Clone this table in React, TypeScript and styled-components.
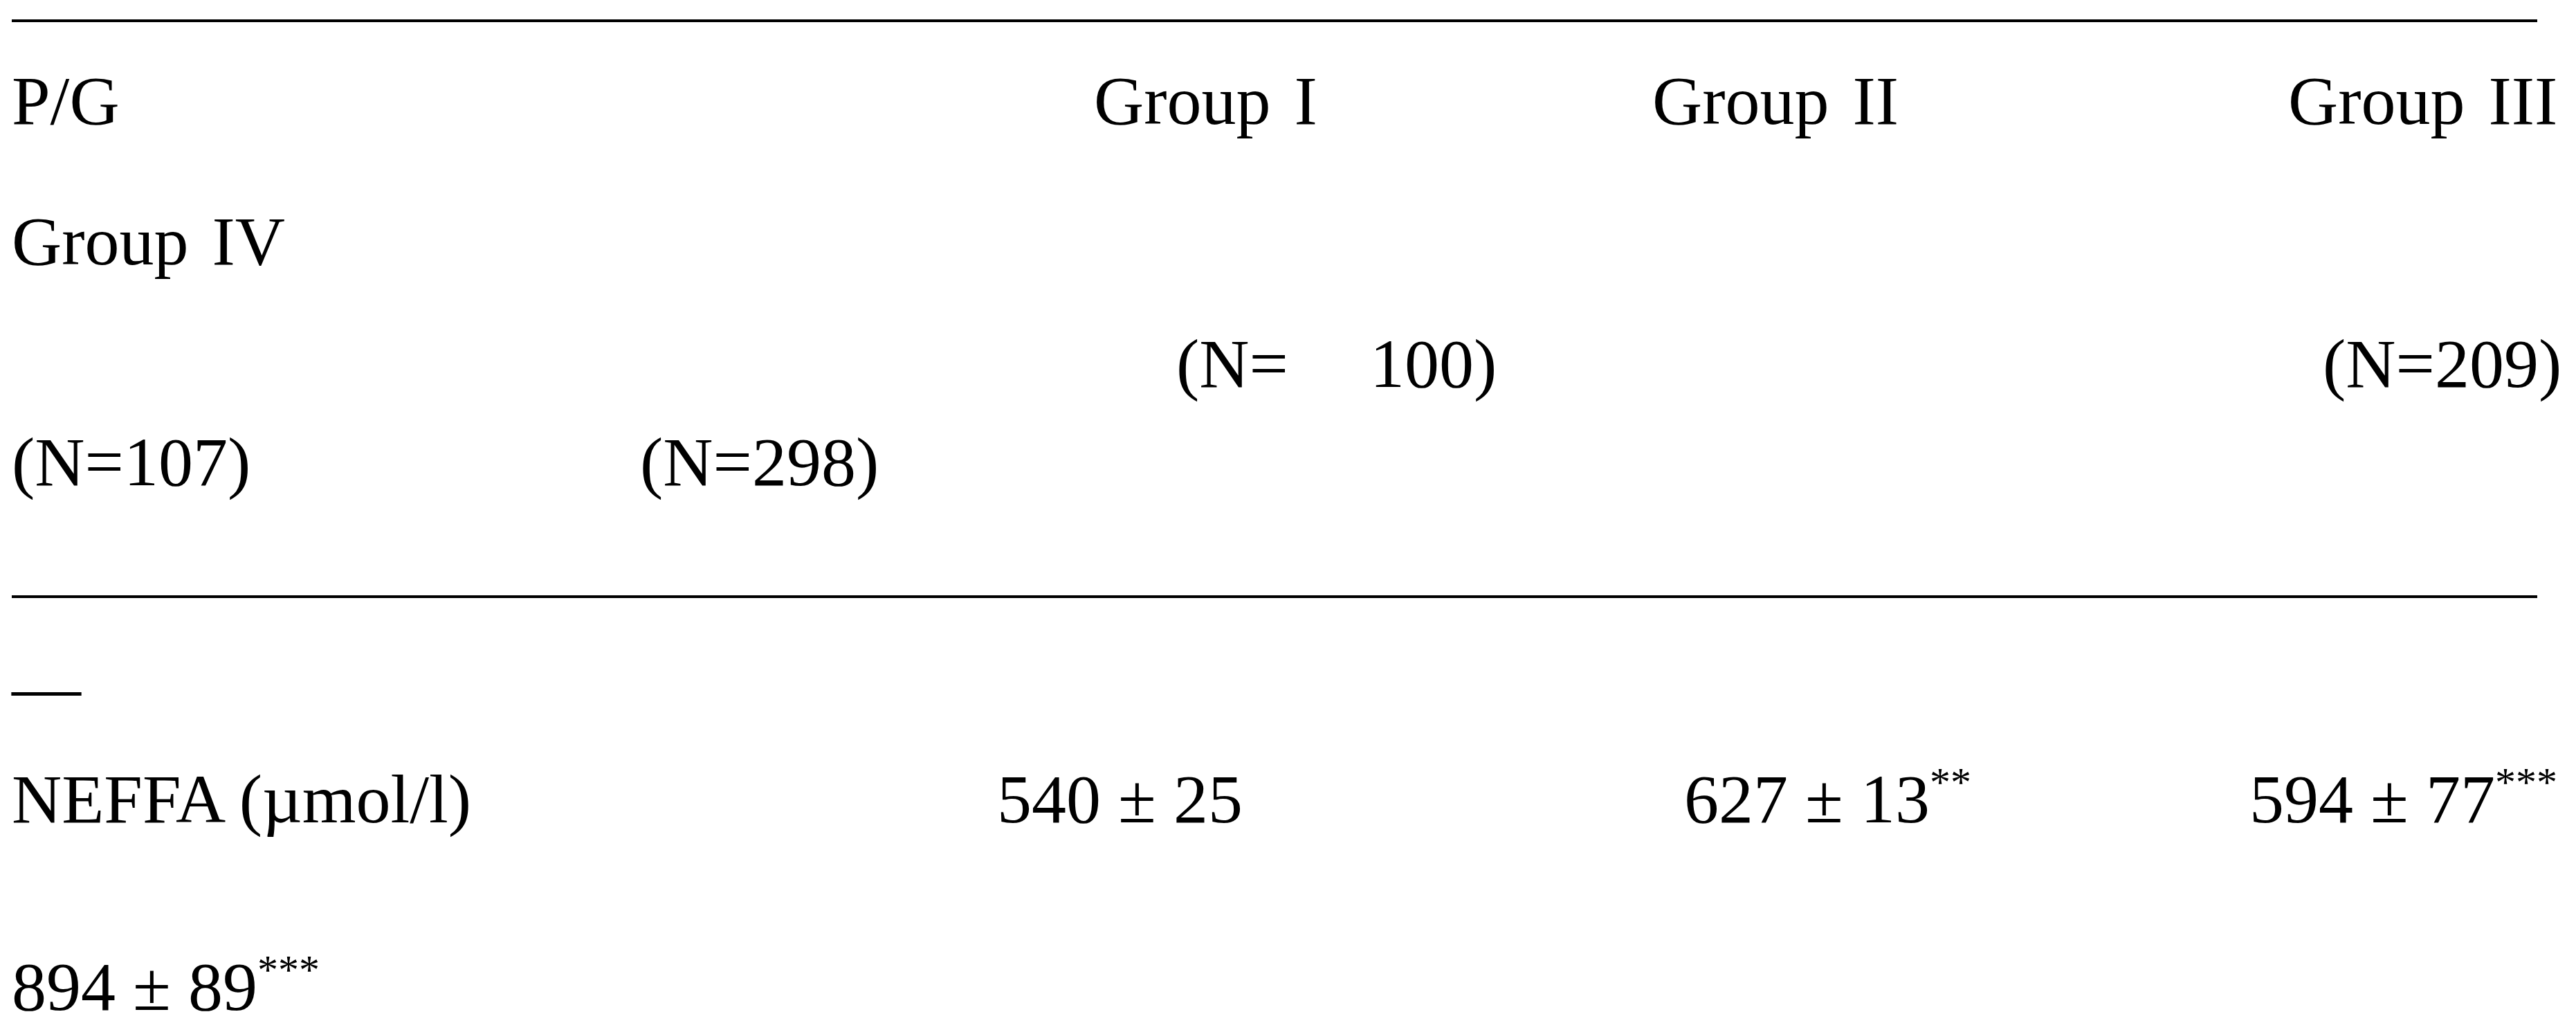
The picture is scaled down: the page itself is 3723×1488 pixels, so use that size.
import styled, { createGlobalStyle } from 'styled-components';

const GlobalStyle = createGlobalStyle`
  html, body {
    margin: 0;
    padding: 0;
    background: #fff;
  }
`;

const Page = styled.main`
  padding: 28px 0 0 17px;
  font-family: 'Liberation Serif', 'Times New Roman', serif;
  font-size: 100px;
  color: #000;
`;

const Rule = styled.div<{ $gap: number }>`
  margin-top: ${(p) => p.$gap}px;
  width: 3650px;
  height: 4px;
  background: #000;
`;

const Line = styled.div<{ $gap: number; $cols: string }>`
  display: grid;
  grid-template-columns: ${(p) => p.$cols};
  margin-top: ${(p) => p.$gap}px;
  height: 100px;
  line-height: 100px;
  white-space: nowrap;
`;

const Cell = styled.span``;

const GroupLabel = styled.span`
  word-spacing: 9px;
`;

const Stars = styled.sup`
  font-size: 60px;
  line-height: 0;
  vertical-align: 38px;
`;

const Gap = styled.span<{ $w: number }>`
  display: inline-block;
  width: ${(p) => p.$w}px;
`;

export default function App() {
  return (
    <>
      <GlobalStyle />
      <Page>
        <Rule $gap={0} />

        <Line $gap={64} $cols="1564px 807px 919px auto">
          <Cell>P/G</Cell>
          <GroupLabel>Group I</GroupLabel>
          <GroupLabel>Group II</GroupLabel>
          <GroupLabel>Group III</GroupLabel>
        </Line>

        <Line $gap={103} $cols="auto">
          <GroupLabel>Group IV</GroupLabel>
        </Line>

        <Line $gap={77} $cols="1683px 1657px auto">
          <Cell />
          <Cell>
            (N=<Gap $w={118} />100)
          </Cell>
          <Cell>(N=209)</Cell>
        </Line>

        <Line $gap={42} $cols="908px auto">
          <Cell>(N=107)</Cell>
          <Cell>(N=298)</Cell>
        </Line>

        <Rule $gap={142} />

        <Line $gap={79} $cols="auto">
          <Cell>—</Cell>
        </Line>

        <Line $gap={62} $cols="1424px 993px 817px auto">
          <Cell>NEFFA (µmol/l)</Cell>
          <Cell>540 ± 25</Cell>
          <Cell>
            627 ± 13<Stars>**</Stars>
          </Cell>
          <Cell>
            594 ± 77<Stars>***</Stars>
          </Cell>
        </Line>

        <Line $gap={171} $cols="auto">
          <Cell>
            894 ± 89<Stars>***</Stars>
          </Cell>
        </Line>
      </Page>
    </>
  );
}
